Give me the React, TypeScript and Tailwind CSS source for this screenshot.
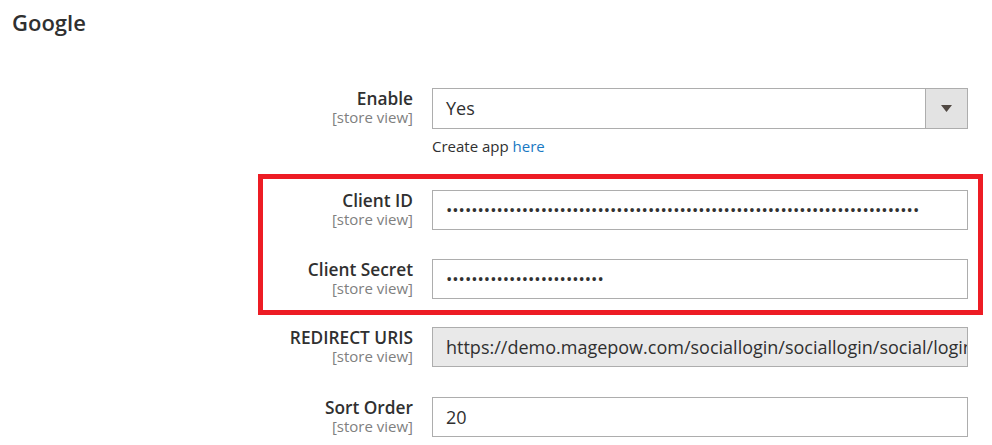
import React from 'react';

const font = { fontFamily: '"Open Sans", "Liberation Sans", sans-serif' };

const FieldLabel: React.FC<{ title: string; scope?: string }> = ({ title, scope = '[store view]' }) => (
    <div className="w-[413px] shrink-0 text-right">
        <div className="text-[17.3px] font-semibold leading-[21px] text-[#303030]">{title}</div>
        <div className="text-[15px] leading-[16px] text-[#808080]">{scope}</div>
    </div>
);

const Row: React.FC<{ title: string; className?: string; children: React.ReactNode }> = ({ title, className = '', children }) => (
    <div className={`flex gap-[19px] ${className}`}>
        <FieldLabel title={title} />
        <div className="w-[536px] shrink-0">{children}</div>
    </div>
);

const TextBox: React.FC<{ value: string; disabled?: boolean; masked?: boolean }> = ({ value, disabled, masked }) => (
    <div
        className={`flex h-[40px] items-center overflow-hidden whitespace-nowrap border border-[#adadad] px-[13px] text-[#303030] ${
            masked ? 'text-[16.8px]' : 'text-[18px]'
        } ${disabled ? 'bg-[#e9e9e9]' : 'bg-white'}`}
    >
        {value}
    </div>
);

export default function App() {
    const clientId = '•'.repeat(75);
    const clientSecret = '•'.repeat(25);

    return (
        <div className="h-[445px] w-[992px] overflow-hidden bg-white" style={font}>
            <div className="pl-[12px] pt-[8px] text-[22px] font-semibold leading-[28px] text-[#303030]">Google</div>

            <Row title="Enable" className="mt-[52px]">
                <div className="flex h-[41px] border border-[#adadad] bg-white">
                    <div className="flex flex-1 items-center px-[13px] text-[18px] text-[#303030]">Yes</div>
                    <div className="flex w-[42px] items-center justify-center border-l border-[#adadad] bg-[#e3e3e3]">
                        <svg width="11" height="7" viewBox="0 0 11 7">
                            <path d="M0 0 H11 L5.5 7 Z" fill="#514943" />
                        </svg>
                    </div>
                </div>
                <div className="mt-[8px] text-[15px] leading-[18px] text-[#303030]">
                    Create app <span className="text-[#1979c3]">here</span>
                </div>
            </Row>

            <div className="relative mt-[35px]">
                <Row title="Client ID">
                    <TextBox value={clientId} masked />
                </Row>
                <Row title="Client Secret" className="mt-[29px]">
                    <TextBox value={clientSecret} masked />
                </Row>
                <div className="pointer-events-none absolute -top-[16px] -bottom-[16px] left-[258px] w-[725px] border-[5px] border-[#ed1c24]" />
            </div>

            <Row title="REDIRECT URIS" className="mt-[28px]">
                <TextBox value="https://demo.magepow.com/sociallogin/sociallogin/social/login/type/google/" disabled />
            </Row>

            <Row title="Sort Order" className="mt-[30px]">
                <TextBox value="20" />
            </Row>
        </div>
    );
}
